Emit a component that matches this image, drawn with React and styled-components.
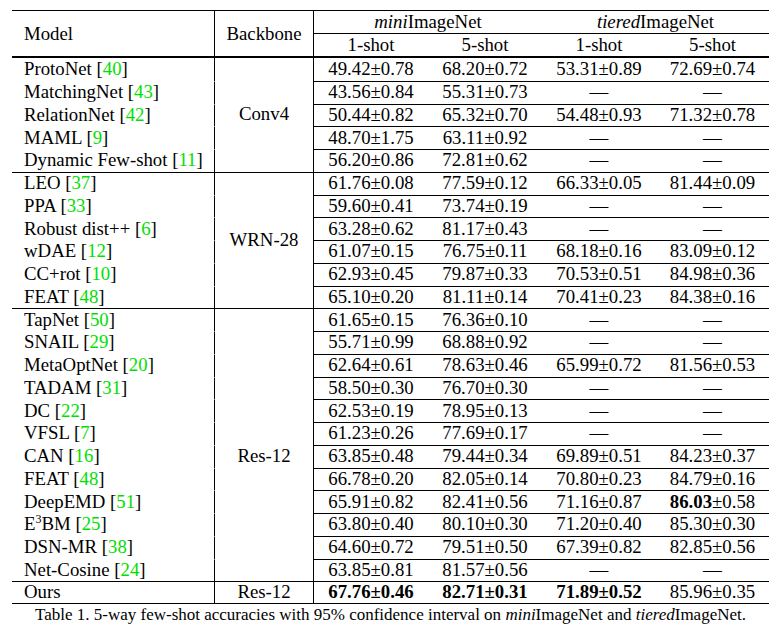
import React from "react";
import styled, { createGlobalStyle } from "styled-components";

const Global = createGlobalStyle`
  html, body { margin: 0; padding: 0; background: #fff; }
  body { font-family: "Liberation Serif", "Times New Roman", serif; color: #000; }
`;

const Page = styled.div`
  padding: 10px 6px 0 12px;
  width: 757px;
  font-family: "Liberation Serif", "Times New Roman", serif;
`;

const Table = styled.table`
  width: 757px;
  table-layout: fixed;
  border-collapse: separate;
  border-spacing: 0;
  font-family: "Liberation Serif", "Times New Roman", serif;
  font-size: 18.8px;
  line-height: 20px;
  color: #000;
`;

const Col = styled.col`
  width: ${(p) => p.$w}px;
`;

const Th = styled.th`
  font-weight: normal;
  padding: 0;
  height: ${(p) => p.$h}px;
  box-sizing: border-box;
  text-align: ${(p) => (p.$left ? "left" : "center")};
  padding-left: ${(p) => (p.$left ? "12px" : "0")};
  vertical-align: middle;
  border-top: ${(p) => (p.$top ? "1px solid #000" : "0")};
  border-bottom: ${(p) => p.$bottom || 0}px solid #000;
  border-right: ${(p) => (p.$right ? "1px solid #000" : "0")};
  white-space: nowrap;
`;

const Td = styled.td`
  padding: 0 0 1px 0;
  height: 22.75px;
  box-sizing: border-box;
  text-align: ${(p) => (p.$left ? "left" : "center")};
  padding-left: ${(p) => (p.$left ? "12px" : "0")};
  padding-top: ${(p) => p.$shift || 0}px;
  vertical-align: middle;
  border-top: ${(p) => (p.$line === "none" ? "0" : `1px solid ${p.$line === "black" ? "#000" : "transparent"}`)};
  border-right: ${(p) => (p.$right ? "1px solid #000" : "0")};
  border-bottom: ${(p) => (p.$last ? "1px solid #000" : "0")};
  font-weight: ${(p) => (p.$bold ? "bold" : "normal")};
  white-space: nowrap;
`;

const Cite = styled.span`
  color: #00e000;
`;

const Bold = styled.b`
  font-weight: bold;
`;

const Sup = styled.sup`
  font-size: 12px;
  line-height: 0;
`;

const Caption = styled.div`
  width: 757px;
  text-align: center;
  font-size: 17px;
  line-height: 20px;
  margin-top: 1px;
`;

const groups = [
  {
    backbone: "Conv4",
    rows: [
      ["ProtoNet", "40", "49.42±0.78", "68.20±0.72", "53.31±0.89", "72.69±0.74"],
      ["MatchingNet", "43", "43.56±0.84", "55.31±0.73", "—", "—"],
      ["RelationNet", "42", "50.44±0.82", "65.32±0.70", "54.48±0.93", "71.32±0.78"],
      ["MAML", "9", "48.70±1.75", "63.11±0.92", "—", "—"],
      ["Dynamic Few-shot", "11", "56.20±0.86", "72.81±0.62", "—", "—"],
    ],
  },
  {
    backbone: "WRN-28",
    rows: [
      ["LEO", "37", "61.76±0.08", "77.59±0.12", "66.33±0.05", "81.44±0.09"],
      ["PPA", "33", "59.60±0.41", "73.74±0.19", "—", "—"],
      ["Robust dist++", "6", "63.28±0.62", "81.17±0.43", "—", "—"],
      ["wDAE", "12", "61.07±0.15", "76.75±0.11", "68.18±0.16", "83.09±0.12"],
      ["CC+rot", "10", "62.93±0.45", "79.87±0.33", "70.53±0.51", "84.98±0.36"],
      ["FEAT", "48", "65.10±0.20", "81.11±0.14", "70.41±0.23", "84.38±0.16"],
    ],
  },
  {
    backbone: "Res-12",
    shift: 22,
    rows: [
      ["TapNet", "50", "61.65±0.15", "76.36±0.10", "—", "—"],
      ["SNAIL", "29", "55.71±0.99", "68.88±0.92", "—", "—"],
      ["MetaOptNet", "20", "62.64±0.61", "78.63±0.46", "65.99±0.72", "81.56±0.53"],
      ["TADAM", "31", "58.50±0.30", "76.70±0.30", "—", "—"],
      ["DC", "22", "62.53±0.19", "78.95±0.13", "—", "—"],
      ["VFSL", "7", "61.23±0.26", "77.69±0.17", "—", "—"],
      ["CAN", "16", "63.85±0.48", "79.44±0.34", "69.89±0.51", "84.23±0.37"],
      ["FEAT", "48", "66.78±0.20", "82.05±0.14", "70.80±0.23", "84.79±0.16"],
      ["DeepEMD", "51", "65.91±0.82", "82.41±0.56", "71.16±0.87", "deepemd"],
      ["E3BM", "25", "63.80±0.40", "80.10±0.30", "71.20±0.40", "85.30±0.30"],
      ["DSN-MR", "38", "64.60±0.72", "79.51±0.50", "67.39±0.82", "82.85±0.56"],
      ["Net-Cosine", "24", "63.85±0.81", "81.57±0.56", "—", "—"],
    ],
  },
];

function ModelName({ name }) {
  if (name === "E3BM") {
    return (
      <>
        E<Sup>3</Sup>BM
      </>
    );
  }
  return name;
}

function Value({ v }) {
  if (v === "deepemd") {
    return (
      <>
        <Bold>86.03</Bold>±0.58
      </>
    );
  }
  return v;
}

export default function App() {
  return (
    <Page>
      <Global />
      <Table>
        <colgroup>
          <Col $w={203} />
          <Col $w={99} />
          <Col $w={114} />
          <Col $w={114} />
          <Col $w={114} />
          <Col $w={113} />
        </colgroup>
        <thead>
          <tr>
            <Th rowSpan={2} $left $top $right $bottom={2} $h={48}>
              Model
            </Th>
            <Th rowSpan={2} $top $right $bottom={2} $h={48}>
              Backbone
            </Th>
            <Th colSpan={2} $top $bottom={1} $h={24}>
              <i>mini</i>ImageNet
            </Th>
            <Th colSpan={2} $top $bottom={1} $h={24}>
              <i>tiered</i>ImageNet
            </Th>
          </tr>
          <tr>
            <Th $bottom={2} $h={24}>1-shot</Th>
            <Th $bottom={2} $h={24}>5-shot</Th>
            <Th $bottom={2} $h={24}>1-shot</Th>
            <Th $bottom={2} $h={24}>5-shot</Th>
          </tr>
        </thead>
        <tbody>
          {groups.map((g, gi) =>
            g.rows.map((r, ri) => {
              const first = ri === 0;
              const rowLine = first ? (gi === 0 ? "none" : "black") : "black";
              const modelLine = first ? (gi === 0 ? "none" : "black") : "clear";
              return (
                <tr key={`${gi}-${ri}`}>
                  <Td $left $right $line={modelLine}>
                    <ModelName name={r[0]} /> [<Cite>{r[1]}</Cite>]
                  </Td>
                  {first && (
                    <Td rowSpan={g.rows.length} $right $line={rowLine} $shift={g.shift}>
                      {g.backbone}
                    </Td>
                  )}
                  {r.slice(2).map((v, vi) => (
                    <Td key={vi} $line={rowLine}>
                      <Value v={v} />
                    </Td>
                  ))}
                </tr>
              );
            })
          )}
          <tr>
            <Td $left $right $line="black" $last>
              Ours
            </Td>
            <Td $right $line="black" $last>
              Res-12
            </Td>
            <Td $line="black" $last $bold>67.76±0.46</Td>
            <Td $line="black" $last $bold>82.71±0.31</Td>
            <Td $line="black" $last $bold>71.89±0.52</Td>
            <Td $line="black" $last>85.96±0.35</Td>
          </tr>
        </tbody>
      </Table>
      <Caption>
        Table 1. 5-way few-shot accuracies with 95% confidence interval on <i>mini</i>ImageNet and{" "}
        <i>tiered</i>ImageNet.
      </Caption>
    </Page>
  );
}
